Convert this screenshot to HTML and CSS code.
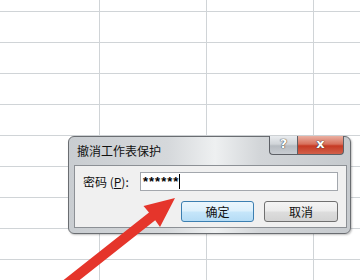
FILE: index.html
```html
<!DOCTYPE html>
<html lang="zh-CN">
<head>
  <meta charset="UTF-8" />
  <meta name="viewport" content="width=device-width, initial-scale=1.0" />
  <title>撤消工作表保护</title>
  <link rel="stylesheet" href="styles.css">
</head>
<body>
  <div class="sheet">
    <div class="cell"></div><div class="cell"></div><div class="cell"></div><div class="cell"></div>
    <div class="cell"></div><div class="cell"></div><div class="cell"></div><div class="cell"></div>
    <div class="cell"></div><div class="cell"></div><div class="cell"></div><div class="cell"></div>
    <div class="cell"></div><div class="cell"></div><div class="cell"></div><div class="cell"></div>
    <div class="cell"></div><div class="cell"></div><div class="cell"></div><div class="cell"></div>
    <div class="cell"></div><div class="cell"></div><div class="cell"></div><div class="cell"></div>
    <div class="cell"></div><div class="cell"></div><div class="cell"></div><div class="cell"></div>
    <div class="cell"></div><div class="cell"></div><div class="cell"></div><div class="cell"></div>
    <div class="cell"></div><div class="cell"></div><div class="cell"></div><div class="cell"></div>
    <div class="cell"></div><div class="cell"></div><div class="cell"></div><div class="cell"></div>
  </div>

  <div class="dialog">
    <div class="titlebar">
      <span class="title">撤消工作表保护</span>
      <div class="caption-btns">
        <span class="cap-btn help">?</span>
        <span class="cap-btn close">x</span>
      </div>
    </div>
    <div class="client">
      <div class="row">
        <label class="label">密码 (<u>P</u>):</label>
        <div class="input"><span class="stars">******</span></div>
      </div>
      <div class="actions">
        <button class="btn default">确定</button>
        <button class="btn">取消</button>
      </div>
    </div>
  </div>

  <svg class="arrow" width="360" height="280" viewBox="0 0 360 280">
    <polygon points="175,198 160,227 155.2,220.3 62.1,293.9 55.9,286.1 149,212.5 143.5,206" fill="#e5352b" />
  </svg>
</body>
</html>
```

FILE: styles.css
```css
body {
  margin: 0;
  width: 360px;
  height: 280px;
  overflow: hidden;
  background: #fff;
  position: relative;
  font-family: "Noto Sans CJK SC", "Noto Sans", sans-serif;
}
.sheet {
  display: grid;
  grid-template-columns: 100px 107px 107px 60px;
  grid-template-rows: 12px repeat(9, 31px);
}
.cell {
  border-right: 1px solid #d0d4d7;
  border-bottom: 1px solid #d0d4d7;
}

.dialog {
  position: absolute;
  left: 68px;
  top: 136px;
  width: 283px;
  height: 98px;
  box-sizing: border-box;
  padding: 0 3px 5px 5px;
  border: 1px solid #6a6d71;
  border-radius: 6px;
  background: linear-gradient(90deg, #c9cdd1 0%, #d5d8db 35%, #eef0f1 52%, #d2d5d8 68%, #c6cace 100%);
  box-shadow: 1px 1px 2px rgba(0, 0, 0, 0.25);
}
.titlebar {
  display: flex;
  align-items: flex-start;
  height: 28px;
}
.title {
  padding: 6px 0 0 3px;
  font-size: 12px;
  line-height: 16px;
  color: #111;
}
.caption-btns {
  display: flex;
  margin: -1px 3px 0 auto;
}
.cap-btn {
  height: 18px;
  border: 1px solid #5d6066;
  border-top: 0;
  font-family: "DejaVu Sans", sans-serif;
  font-weight: bold;
  font-size: 13px;
  line-height: 16px;
  text-align: center;
  color: #fff;
  text-shadow: 0 0 1px #333, 0 0 1px #333;
}
.help {
  width: 27px;
  border-radius: 0 0 0 4px;
  border-right: 0;
  background: linear-gradient(180deg, #e9ecef 0%, #d0d4d8 45%, #b6bbc1 55%, #c9cdd2 100%);
}
.close {
  width: 45px;
  border-radius: 0 0 4px 0;
  background: linear-gradient(180deg, #eab0a2 0%, #d8705c 45%, #c63a24 55%, #d2604a 100%);
}

.client {
  height: 63px;
  box-sizing: border-box;
  padding: 6px 8px 0 8px;
  border: 1px solid #8c9095;
  background: #f0f0f0;
}
.row {
  display: flex;
  align-items: center;
}
.label {
  font-size: 12px;
  color: #111;
}
.input {
  margin-left: auto;
  width: 198px;
  height: 19px;
  box-sizing: border-box;
  padding-left: 2px;
  border: 1px solid #a3a7ad;
  background: #fff;
  display: flex;
  align-items: center;
}
.stars {
  font-family: "Liberation Sans", sans-serif;
  font-weight: bold;
  font-size: 13px;
  letter-spacing: 1px;
  line-height: 15px;
  padding-right: 0;
  border-right: 1px solid #000;
}
.actions {
  display: flex;
  justify-content: flex-end;
  gap: 10px;
  margin-top: 10px;
}
.btn {
  width: 74px;
  height: 21px;
  padding: 0;
  border: 1px solid #707070;
  border-radius: 3px;
  background: linear-gradient(180deg, #f4f4f4 0%, #ebebeb 48%, #dddddd 52%, #d3d3d3 100%);
  font-family: "Noto Sans CJK SC", sans-serif;
  font-size: 12px;
  color: #111;
}
.btn.default {
  width: 73px;
  border-color: #3c7fb1;
  background: linear-gradient(180deg, #ebf6fd 0%, #dcf0fc 48%, #c6e6fa 52%, #b5dcf5 100%);
}

.arrow {
  position: absolute;
  left: 0;
  top: 0;
}
```
